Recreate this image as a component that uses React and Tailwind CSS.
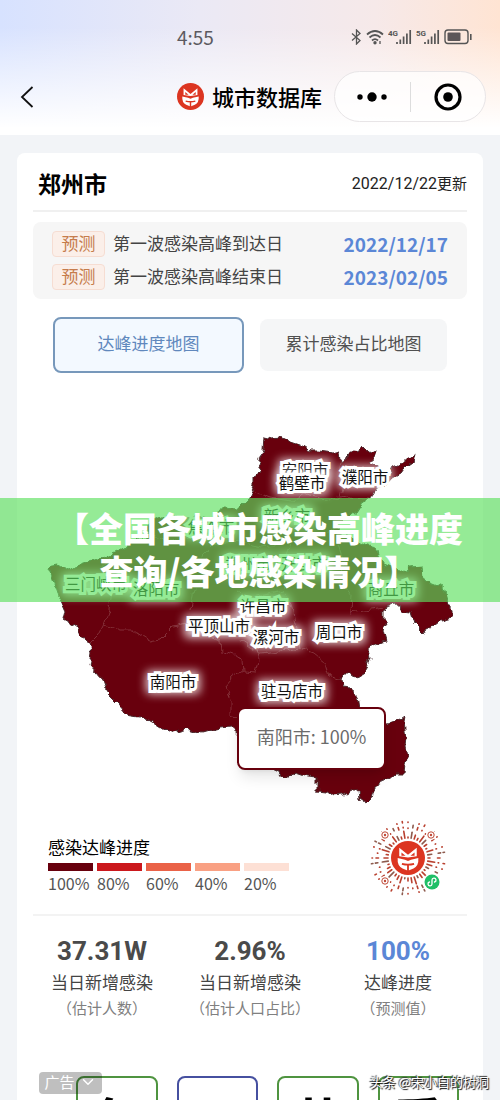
import { useState } from 'react';
import { ChevronDown } from 'lucide-react';

const cities = [
  { name: '安阳市', x: 305, y: 476 },
  { name: '鹤壁市', x: 302, y: 489 },
  { name: '濮阳市', x: 365, y: 483 },
  { name: '新乡市', x: 287, y: 522 },
  { name: '焦作市', x: 211, y: 533 },
  { name: '郑州市', x: 248, y: 570 },
  { name: '开封市', x: 304, y: 570 },
  { name: '三门峡市', x: 96, y: 590 },
  { name: '洛阳市', x: 156, y: 595 },
  { name: '商丘市', x: 391, y: 595 },
  { name: '许昌市', x: 263, y: 612 },
  { name: '平顶山市', x: 219, y: 632 },
  { name: '漯河市', x: 276, y: 643 },
  { name: '周口市', x: 339, y: 638 },
  { name: '南阳市', x: 173, y: 688 },
  { name: '驻马店市', x: 292, y: 697 },
];

const peaks = [
  { label: '第一波感染高峰到达日', date: '2022/12/17' },
  { label: '第一波感染高峰结束日', date: '2023/02/05' },
];

const legend = [
  { label: '100%', color: 'bg-[#67000d]' },
  { label: '80%', color: 'bg-[#cb181d]' },
  { label: '60%', color: 'bg-[#ea6248]' },
  { label: '40%', color: 'bg-[#f9a083]' },
  { label: '20%', color: 'bg-[#fde0d5]' },
];

const stats = [
  { value: '37.31W', label: '当日新增感染', note: '（估计人数）', color: 'text-[#4a4a4a]' },
  { value: '2.96%', label: '当日新增感染', note: '（估计人口占比）', color: 'text-[#4a4a4a]' },
  { value: '100%', label: '达峰进度', note: '（预测值）', color: 'text-[#5b87d6]' },
];

const ads = [
  { text: '免', border: 'border-[#4f9440]' },
  { text: '', border: 'border-[#4650a0]' },
  { text: '共', border: 'border-[#4f9440]' },
  { text: '看', border: 'border-[#4f9440]' },
];

const outline =
  'M264 436 L272 438 280 437 288 441 300 445 310 451 318 451 332 453 340 451 341 461 347 458 352 450 358 451 361 447 368 450 370 454 377 452 375 458 370 462 376 467 384 471 389 474 393 467 400 464 407 458 412 457 417 453 415 462 409 464 403 470 400 474 393 478 386 486 375 488 371 494 368 498 363 508 355 511 350 515 338 527 342 535 352 537 362 543 377 547 379 555 383 563 393 567 400 572 410 568 422 567 423 577 430 583 443 588 447 602 452 610 452 618 440 621 432 627 422 632 413 623 410 613 402 612 398 605 390 606 383 610 383 618 386 623 384 630 387 641 377 643 368 649 370 657 367 665 365 672 357 677 349 674 342 674 340 680 342 687 350 688 355 692 358 697 360 712 372 722 387 725 397 721 404 716 403 722 405 737 404 747 406 757 404 773 395 773 387 780 377 783 372 792 371 799 366 804 359 799 358 790 353 790 343 795 333 796 326 791 318 790 318 777 307 776 295 772 290 776 282 776 278 770 273 768 262 764 245 750 237 733 230 727 220 728 202 733 187 729 173 733 160 727 152 722 140 715 127 713 117 702 107 692 103 680 90 665 92 653 90 643 80 635 77 627 65 620 67 612 63 603 58 594 55 585 52 576 48 567 58 565 65 570 83 564 103 557 125 547 148 535 146 528 153 520 167 515 183 520 197 516 213 520 222 507 240 508 250 498 255 487 255 477 262 473 258 463 263 450Z';

const borders = [
  'M253 491 L270 498 292 501 308 494 330 500 346 497 368 498',
  'M341 461 L339 475 343 485 340 497',
  'M148 535 L170 541 190 538 215 543 240 541 262 547 290 542 315 539 338 527',
  'M213 520 L218 532 215 543 202 556 205 575 194 590 190 610',
  'M110 556 L103 570 112 590 109 610 104 624',
  'M91 643 L98 636 104 624 120 630 132 630 148 641 160 639 172 627 190 624 205 632 220 640 221 651 242 658 243 672 232 678 225 686 231 700 231 715 239 717',
  'M290 542 L286 560 293 578 283 592 293 607 300 648',
  'M338 543 L343 560 340 580 352 596 351 613 365 611 383 608',
  'M243 672 L256 673 260 654 280 652 300 648 314 653 325 662 330 678 340 680',
  'M238 592 L250 599 268 595 283 592',
  'M239 641 L250 648 260 654',
];

function Fox({ x = 0, y = 0, size = 26 }) {
  return (
    <svg x={x} y={y} width={size} height={size} viewBox="0 0 28 28" aria-hidden="true">
      <circle cx="14" cy="14" r="14" fill="#dc3521" />
      <path d="M6.8 12.5 V5.5 L14 11.4 21.2 5.5 V12.5 L14 13.6Z" fill="#fff" />
      <path d="M8.6 9.4 V12.2 L12 12.2Z M19.4 9.4 V12.2 L16 12.2Z" fill="#dc3521" />
      <path d="M5.5 14 L11.5 15.4 14 16.4 16.5 15.4 22.5 14 Q23 20.5 18.5 22.6 L14 24.4 9.5 22.6 Q5 20.5 5.5 14Z" fill="#fff" />
      <path d="M9 18.8 Q14 20.2 19 18.8 M14 19.4 V25" fill="none" stroke="#dc3521" strokeWidth="1.5" />
    </svg>
  );
}

function Signal({ label }) {
  return (
    <svg width="24" height="16" viewBox="0 0 24 16" aria-hidden="true">
      <text x="0" y="7" fontSize="8" fontWeight="700" fill="#555" className="font-['Roboto',sans-serif]">{label}</text>
      <path d="M9 15 V13 M12.3 15 V10.5 M15.6 15 V7.5 M18.9 15 V4.5 M22.2 15 V1" stroke="#555" strokeWidth="1.7" />
    </svg>
  );
}

function StatusBar() {
  return (
    <div className="relative flex h-7 items-center justify-end pr-7">
      <span className="absolute left-[177px] text-[19px] leading-7 text-[#5c5a60]">4:55</span>
      <div className="flex items-center gap-1">
        <svg width="11" height="16" viewBox="0 0 11 16" fill="none" stroke="#555" strokeWidth="1.3" aria-hidden="true">
          <path d="M1 4.5 L9 11.5 5.5 15 V1 L9 4.5 1 11.5" />
        </svg>
        <svg width="18" height="16" viewBox="0 0 18 16" fill="none" stroke="#555" strokeWidth="1.8" aria-hidden="true">
          <path d="M1 5.5 Q9 -1.5 17 5.5 M3.5 8.5 Q9 3.5 14.5 8.5 M6 11.5 Q9 8.8 12 11.5" />
          <circle cx="9" cy="13.8" r="0.8" fill="#555" />
          <path d="M14 12 V15" strokeWidth="1.3" />
        </svg>
        <Signal label="4G" />
        <Signal label="5G" />
        <svg width="28" height="16" viewBox="0 0 28 16" aria-hidden="true">
          <rect x="1" y="1" width="23" height="13.5" rx="3" fill="none" stroke="#555" strokeWidth="1.4" />
          <rect x="3.5" y="3.5" width="13" height="8.5" rx="1" fill="#5c5658" />
          <path d="M26.8 5 V11" stroke="#555" strokeWidth="1.6" />
        </svg>
      </div>
    </div>
  );
}

function NavBar() {
  return (
    <div className="mt-5 flex items-center pr-[14px] pl-5">
      <button type="button" aria-label="返回" className="flex h-8 w-4 items-center">
        <svg width="14" height="22" viewBox="0 0 14 22" fill="none" stroke="#111" strokeWidth="1.8" aria-hidden="true">
          <path d="M12.5 1 L2 11 12.5 21" />
        </svg>
      </button>
      <div className="ml-auto flex items-center gap-2">
        <Fox size={27} />
        <h1 className="pb-0.5 text-[22px] leading-8 font-medium text-black">城市数据库</h1>
      </div>
      <div className="ml-3 flex h-[51px] w-[152px] items-center rounded-full border border-[#e8e5e7] bg-white/70">
        <button type="button" aria-label="更多" className="flex flex-1 justify-center">
          <svg width="30" height="12" viewBox="0 0 30 12" aria-hidden="true">
            <circle cx="3" cy="6" r="2.7" />
            <circle cx="15" cy="6" r="4.7" />
            <circle cx="27" cy="6" r="2.7" />
          </svg>
        </button>
        <span className="h-[30px] w-px bg-[#dddddd]" />
        <button type="button" aria-label="关闭" className="flex flex-1 justify-center">
          <svg width="28" height="28" viewBox="0 0 28 28" aria-hidden="true">
            <circle cx="14" cy="14" r="12" fill="none" stroke="#000" strokeWidth="3.2" />
            <circle cx="14" cy="14" r="4.8" />
          </svg>
        </button>
      </div>
    </div>
  );
}

function ProvinceMap() {
  return (
    <div className="relative mx-4 mt-[27px]">
      <svg viewBox="33 400 434 420" className="block w-full" role="img" aria-label="达峰进度地图">
        <defs>
          <filter id="rough" x="-5%" y="-5%" width="110%" height="110%">
            <feTurbulence type="fractalNoise" baseFrequency="0.1" numOctaves="2" seed="4" result="noise" />
            <feDisplacementMap in="SourceGraphic" in2="noise" scale="9" xChannelSelector="R" yChannelSelector="G" />
          </filter>
          <filter id="glow" x="-30%" y="-80%" width="160%" height="260%">
            <feGaussianBlur stdDeviation="5" />
          </filter>
        </defs>
        <g filter="url(#rough)">
          <path d={outline} fill="#67000d" stroke="#4a2a2e" strokeWidth="1" />
          {borders.map((d) => (
            <path key={d} d={d} fill="none" stroke="#8a3b43" strokeWidth="0.8" />
          ))}
        </g>
        {cities.map((city) => (
          <g key={city.name} fontSize="15.5" textAnchor="middle">
            <rect
              x={city.x - city.name.length * 8 - 3}
              y={city.y - 17}
              width={city.name.length * 16 + 6}
              height="23"
              rx="4"
              fill="#fff"
              opacity="0.8"
              filter="url(#glow)"
            />
            <text x={city.x} y={city.y} fill="#111" stroke="#fff" strokeWidth="6" paintOrder="stroke">
              {city.name}
            </text>
          </g>
        ))}
      </svg>
      <div className="absolute top-[73%] left-[47%] flex h-[63px] w-[149px] items-center justify-center rounded-lg border-2 border-[#67000d] bg-white pb-1 text-[18px] text-[#6b6b6b] shadow-lg">
        南阳市: 100%
      </div>
    </div>
  );
}

function MiniCode() {
  const rays = Array.from({ length: 40 }, (_, i) => i);
  return (
    <svg width="76" height="76" viewBox="-38 -38 76 76" aria-label="小程序码" role="img">
      {rays.map((i) => (
        <g key={i} transform={`rotate(${i * 9})`} stroke={i % 4 === 1 ? '#8d5a4d' : '#b9402f'} strokeWidth="1.6" strokeLinecap="round">
          <path d={`M0 -20 V${-21 - ((i * 5) % 7)}`} />
          <path d={`M0 ${-29.5 - (i % 2)} V${-30 - ((i * 3) % 4)}`} />
          {i % 3 !== 1 && <path d={`M0 -35.5 V${-36 - (i % 2)}`} />}
        </g>
      ))}
      {[[-23, -23], [23, -23], [-23, 23]].map(([x, y]) => (
        <g key={`${x}${y}`}>
          <circle cx={x} cy={y} r="5" fill="#fff" />
          <circle cx={x} cy={y} r="3.2" fill="#fff" stroke="#c04a38" strokeWidth="1" />
          <circle cx={x} cy={y} r="1.2" fill="#c04a38" />
        </g>
      ))}
      <Fox x={-17} y={-17} size={34} />
      <circle cx="24" cy="24" r="9" fill="#fff" />
      <circle cx="24" cy="24" r="7.5" fill="#1fbf67" />
      <path
        d="M21.5 24 a2 2 0 1 0 2.5 2 V22 a2 2 0 1 1 2.5 2"
        fill="none"
        stroke="#fff"
        strokeWidth="1.3"
        strokeLinecap="round"
      />
    </svg>
  );
}

export default function App() {
  const [tab, setTab] = useState('progress');

  const tabClass = (name) =>
    tab === name
      ? 'h-14 w-[191px] rounded-lg border-2 border-[#7798bb] bg-[#f3f9ff] pb-1 text-[17px] text-[#6088bd]'
      : 'h-[52px] w-[187px] rounded-lg bg-[#f5f6f7] pb-1 text-[17px] text-[#505050]';

  return (
    <div className="relative h-screen overflow-hidden bg-[#f2f4f7] font-['Noto_Sans_CJK_SC',sans-serif]">
      <header className="h-[135px] bg-[linear-gradient(to_bottom,transparent_20%,white_95%),linear-gradient(to_right,#d7e2ff,#ebe9f5_40%,#f6e9e9_75%,#ffe4d3)] pt-[23px]">
        <StatusBar />
        <NavBar />
      </header>

      <main className="mx-[17px] mt-[18px] rounded-lg bg-white">
        <div className="mx-4 flex h-[59px] items-center justify-between border-b-2 border-[#f0f0f0] pt-1 pl-[5px]">
          <h2 className="pb-0.5 text-[23px] leading-8 font-bold text-black">郑州市</h2>
          <span className="text-[15px] leading-6 text-[#222222]">
            <span className="font-['Roboto',sans-serif] text-[16px]">2022/12/22</span>更新
          </span>
        </div>

        <div className="mx-4 mt-[10px] flex flex-col gap-[7px] rounded-lg bg-[#f6f6f6] py-[9px] pr-[19px] pl-[19px]">
          {peaks.map((peak) => (
            <div key={peak.date} className="flex h-[26px] items-center">
              <span className="flex h-[26px] w-[53px] items-center justify-center rounded border border-[#f6ddd2] bg-[#fbefe9] pb-0.5 text-[17px] text-[#c67c4c]">
                预测
              </span>
              <span className="ml-2 pb-0.5 text-[17px] leading-6 text-[#444444]">{peak.label}</span>
              <span className="ml-auto text-[19px] leading-6 font-bold text-[#5b87d6]">{peak.date}</span>
            </div>
          ))}
        </div>

        <div className="mt-[18px] flex items-center justify-center gap-4">
          <button type="button" className={tabClass('progress')} onClick={() => setTab('progress')}>
            达峰进度地图
          </button>
          <button type="button" className={tabClass('total')} onClick={() => setTab('total')}>
            累计感染占比地图
          </button>
        </div>

        <ProvinceMap />

        <div className="mx-4 flex items-start justify-between border-b-2 border-[#f3f3f3] pr-[21px] pb-[18px] pl-[15px]">
          <div className="pt-[15px]">
            <h3 className="text-[17px] leading-6 text-black">感染达峰进度</h3>
            <ul className="mt-1 flex gap-1">
              {legend.map((item) => (
                <li key={item.label} className="w-[45px]">
                  <div className={`h-2 ${item.color}`} />
                  <span className="block text-[16px] leading-6 whitespace-nowrap text-[#555555]">{item.label}</span>
                </li>
              ))}
            </ul>
          </div>
          <MiniCode />
        </div>

        <dl className="mx-[11px] grid grid-cols-3 pt-[18px] text-center">
          {stats.map((stat) => (
            <div key={stat.note} className="flex flex-col">
              <dt className="order-2 text-[17px] leading-8 text-[#444444]">{stat.label}</dt>
              <dd className={`order-1 pt-0.5 font-['Roboto',sans-serif] text-[26px] leading-[30px] font-bold ${stat.color}`}>
                {stat.value}
              </dd>
              <dd className="order-3 text-[15px] leading-5 whitespace-nowrap text-[#808080]">{stat.note}</dd>
            </div>
          ))}
        </dl>

        <div className="relative mt-[58px] mr-6 ml-[59px]">
          <div className="grid grid-cols-4 gap-[19px]">
            {ads.map((ad, i) => (
              <div
                key={i}
                className={`h-[84px] rounded-lg border-2 bg-white pt-3 text-center text-[52px] leading-[60px] font-bold text-black ${ad.border}`}
              >
                {ad.text}
              </div>
            ))}
          </div>
          <button
            type="button"
            className="absolute -top-1 -left-[37px] flex h-[22px] w-[63px] items-center justify-center gap-1 rounded-sm bg-black/25 pb-0.5 text-[15px] text-white"
          >
            广告
            <ChevronDown size={18} />
          </button>
        </div>
      </main>

      <p className="absolute top-[1072px] right-[11px] text-[13px] leading-5 text-white [text-shadow:1px_1px_1px_#000,-1px_-1px_1px_#333]">
        头条 @宋小白的树洞
      </p>

      <div className="absolute inset-x-0 top-[498px] flex h-[104px] flex-col items-center justify-center bg-[#5ce05e]/65 pb-0.5 pl-[18px] text-[34px] leading-[43px] font-black whitespace-nowrap text-white">
        <span>【全国各城市感染高峰进度</span>
        <span>查询/各地感染情况】</span>
      </div>
    </div>
  );
}
